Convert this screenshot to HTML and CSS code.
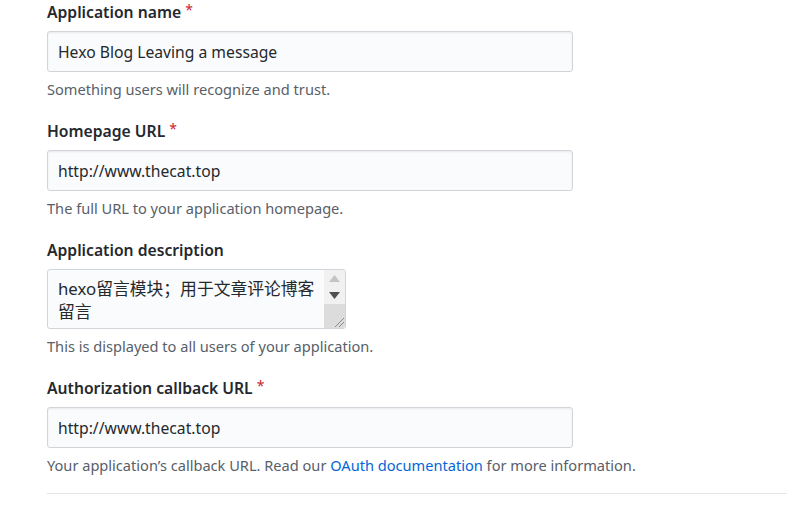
FILE: index.html
```html
<!DOCTYPE html>
<html lang="en">
<head>
<meta charset="utf-8">
<title>Register a new OAuth application</title>
<link rel="stylesheet" href="styles.css">
</head>
<body>
<form class="app-form">
  <dl class="form-group">
    <dt class="form-label">Application name <span class="required">*</span></dt>
    <dd>
      <div class="form-control">Hexo Blog Leaving a message</div>
      <p class="note">Something users will recognize and trust.</p>
    </dd>
  </dl>
  <dl class="form-group">
    <dt class="form-label">Homepage URL <span class="required">*</span></dt>
    <dd>
      <div class="form-control">http://www.thecat.top</div>
      <p class="note">The full URL to your application homepage.</p>
    </dd>
  </dl>
  <dl class="form-group">
    <dt class="form-label">Application description</dt>
    <dd>
      <div class="textarea">
        <div class="textarea-text">hexo留言模块；用于文章评论博客留言</div>
        <div class="scrollbar">
          <div class="sb-btn"><svg width="11" height="7" viewBox="0 0 11 7"><path d="M0 7 L5.5 0 L11 7 Z" fill="#c4c4c4"/></svg></div>
          <div class="sb-btn"><svg width="11" height="7" viewBox="0 0 11 7"><path d="M0 0 L11 0 L5.5 7 Z" fill="#505050"/></svg></div>
          <div class="sb-track"><svg class="grip" width="10" height="10" viewBox="0 0 10 10"><path d="M1 10 L10 1 M5 10 L10 5" stroke="#8a8a8a" stroke-width="1"/></svg></div>
        </div>
      </div>
      <p class="note">This is displayed to all users of your application.</p>
    </dd>
  </dl>
  <dl class="form-group">
    <dt class="form-label">Authorization callback URL <span class="required">*</span></dt>
    <dd>
      <div class="form-control">http://www.thecat.top</div>
      <p class="note">Your application’s callback URL. Read our <a class="link" href="#">OAuth documentation</a> for more information.</p>
    </dd>
  </dl>
  <hr class="divider">
</form>
</body>
</html>
```
FILE: styles.css
```css
html, body {
  margin: 0;
  padding: 0;
  background: #ffffff;
}
body {
  font-family: "Noto Sans", "Noto Sans CJK SC", sans-serif;
  color: #24292e;
}
.app-form {
  padding-left: 47px;
}
.form-group {
  margin: 0 0 21px 0;
}
.form-label {
  font-size: 15.7px;
  font-weight: 600;
  line-height: 24px;
  margin-bottom: 7px;
}
.required {
  color: #cb2431;
  font-weight: normal;
  font-size: 14px;
  vertical-align: top;
  line-height: 20px;
}
.form-group dd {
  margin: 0;
}
.form-control {
  box-sizing: border-box;
  width: 526px;
  height: 41px;
  padding: 1px 10px 0 10px;
  display: flex;
  align-items: center;
  font-size: 15.7px;
  background: #fafbfc;
  border: 1px solid #d1d5da;
  border-radius: 3px;
  box-shadow: inset 0 1px 2px rgba(27, 31, 35, 0.075);
}
.note {
  margin: 8px 0 0 0;
  font-size: 14.6px;
  line-height: 18px;
  color: #586069;
}
.link {
  color: #0366d6;
  text-decoration: none;
}
.textarea {
  box-sizing: border-box;
  width: 299px;
  height: 60px;
  margin-top: 1px;
  display: flex;
  background: #fafbfc;
  border: 1px solid #d1d5da;
  border-radius: 3px;
  overflow: hidden;
}
.textarea-text {
  flex: 1;
  padding: 7px 3px 0 10px;
  font-size: 16.8px;
  line-height: 23px;
}
.scrollbar {
  width: 21px;
  display: flex;
  flex-direction: column;
  background: #f1f1f1;
}
.sb-btn {
  height: 17px;
  display: flex;
  align-items: center;
  justify-content: center;
}
.sb-track {
  flex: 1;
  background: #dcdcdc;
  position: relative;
}
.grip {
  position: absolute;
  right: 1px;
  bottom: 1px;
}
.divider {
  margin: 0;
  margin-top: -2px;
  border: 0;
  border-top: 1px solid #e1e4e8;
}
```
